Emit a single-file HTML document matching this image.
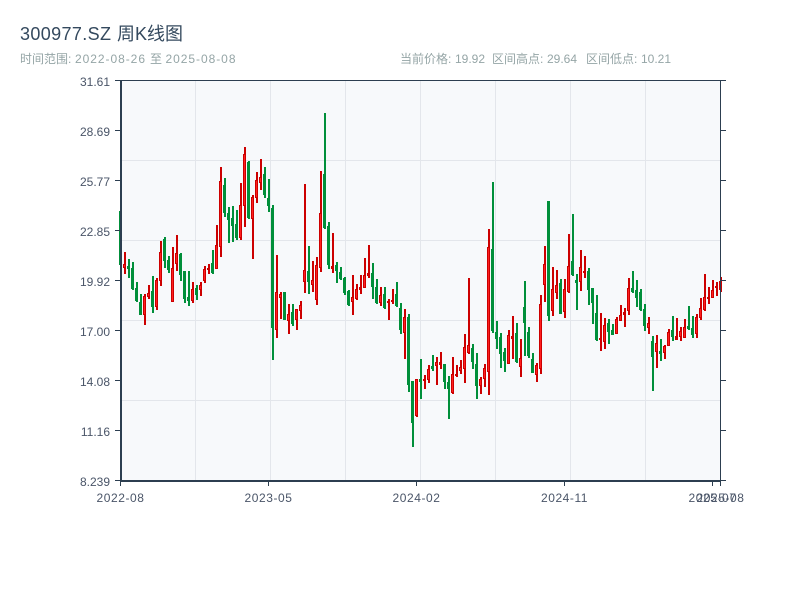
<!DOCTYPE html>
<html lang="zh">
<head>
<meta charset="utf-8">
<title>300977.SZ 周K线图</title>
<style>
html,body{margin:0;padding:0;background:#fff;width:800px;height:600px;overflow:hidden}
svg{position:absolute;left:0;top:0;display:block}
text{font-family:"Liberation Sans","Noto Sans CJK SC",sans-serif}
.t{font-size:18px;fill:#34495e}
.s{font-size:12px;fill:#95a5a6}
.y{font-size:12px;fill:#4a5568;text-anchor:end}
.x{font-size:12px;fill:#4a5568;text-anchor:middle;letter-spacing:.55px}
</style>
</head>
<body>
<svg width="800" height="600" viewBox="0 0 800 600" xmlns="http://www.w3.org/2000/svg">
<text class="t" x="20" y="40" textLength="91" lengthAdjust="spacing">300977.SZ</text>
<text class="t" x="117" y="40" textLength="66" lengthAdjust="spacing">周K线图</text>
<text class="s" x="20" y="63">时间范围:</text>
<text class="s" x="75" y="63" textLength="70" lengthAdjust="spacing">2022-08-26</text>
<text class="s" x="150" y="63">至</text>
<text class="s" x="165.500" y="63" textLength="70" lengthAdjust="spacing">2025-08-08</text>
<text class="s" x="400" y="63">当前价格:</text>
<text class="s" x="455" y="63">19.92</text>
<text class="s" x="492" y="63">区间高点:</text>
<text class="s" x="547" y="63">29.64</text>
<text class="s" x="586" y="63">区间低点:</text>
<text class="s" x="641" y="63">10.21</text>

<rect x="121" y="81" width="600" height="400" fill="#f7f9fb"/>
<path fill="none" stroke="#e3e6eb" stroke-width="1" d="M195.500 81V481M270.500 81V481M345.500 81V481M420.500 81V481M495.500 81V481M570.500 81V481M645.500 81V481M121 160.500H721M121 240.500H721M121 320.500H721M121 400.500H721"/>

<!-- green wicks -->
<path fill="none" stroke="#008f3a" stroke-width="2" d="M121 211V265M129 259V278M133 262V290M137 282V302M141 294V315M153 276V313M165 237V268M169 256V273M181 253V281M185 271V303M189 271V306M197 285V300M213 250V274M225 178V217M229 207V243M233 206V242M237 210V240M249 161V219M265 167V198M269 179V212M273 205V360M285 292V320M293 304V326M309 246V294M325 113V229M329 222V269M337 262V283M341 267V280M345 277V295M349 290V306M373 263V299M377 279V304M385 287V309M397 282V307M401 303V334M409 314V392M413 381V447M421 359V399M433 355V371M445 364V389M449 376V419M473 344V369M477 353V399M493 182V333M497 321V349M501 333V368M505 348V372M517 323V363M525 281V356M529 327V358M533 353V373M549 201V321M561 279V314M573 214V276M577 274V310M589 268V305M593 288V324M597 295V341M609 319V344M613 324V335M633 271V293M637 280V307M641 289V311M645 304V331M653 336V391M661 339V361M673 316V341M689 306V330M693 316V338"/>
<!-- green bodies -->
<path fill="none" stroke="#008f3a" stroke-width="3" d="M120.500 211V265M128.500 266V269M132.500 268V289M136.500 288V301M140.500 302V315M152.500 291V307M164.500 239V261M168.500 260V270M180.500 254V275M184.500 271V299M188.500 297V301M196.500 288V295M212.500 263V273M224.500 185V213M228.500 213V220M232.500 218V226M236.500 224V238M248.500 162V218M264.500 174V195M268.500 198V206M272.500 208V328M284.500 292V320M292.500 312V324M308.500 271V282M324.500 174V228M328.500 226V265M336.500 265V271M340.500 272V279M344.500 278V293M348.500 291V305M372.500 273V287M376.500 287V303M384.500 294V308M396.500 294V306M400.500 308V330M408.500 317V385M412.500 381V423M420.500 379V382M432.500 366V369M444.500 364V382M448.500 382V389M472.500 348V362M476.500 364V386M492.500 249V331M496.500 332V339M500.500 337V354M504.500 352V361M516.500 333V362M524.500 307V323M528.500 332V356M532.500 359V373M548.500 201V316M560.500 283V314M572.500 261V275M576.500 280V283M588.500 271V290M592.500 288V303M596.500 313V340M608.500 323V332M612.500 330V335M632.500 288V292M636.500 290V298M640.500 292V310M644.500 309V326M652.500 341V357M660.500 351V354M672.500 330V337M688.500 326V329M692.500 328V335"/>

<!-- red wicks -->
<path fill="none" stroke="#cc0000" stroke-width="2" d="M125 252V274M145 294V325M149 285V299M157 278V310M161 241V286M173 247V302M177 235V271M193 282V303M201 282V296M205 266V283M209 264V274M217 225V269M221 167V257M241 183V240M245 147V227M253 195V259M257 172V203M261 159V190M277 255V338M281 292V319M289 304V334M297 309V330M301 301V319M305 184V293M313 261V292M317 257V305M321 171V272M333 233V273M353 275V315M357 284V300M361 275V294M365 258V288M369 245V278M381 287V306M389 299V320M393 289V304M405 309V359M417 379V417M425 375V389M429 365V383M437 357V385M441 352V369M453 357V394M457 365V377M461 360V374M465 334V383M469 278V354M481 377V394M485 364V387M489 229V395M509 330V364M513 316V359M521 339V377M537 363V382M541 295V374M545 246V302M553 267V316M557 270V299M565 279V318M569 234V293M581 250V291M585 256V278M601 313V351M605 318V349M617 317V334M621 305V321M625 308V327M629 278V315M649 317V334M657 335V368M665 345V359M669 329V346M677 318V340M681 327V341M685 319V338M697 314V338M701 298V320M705 274V311M709 287V304M713 280V298M717 282V296M721 277V292"/>
<!-- red bodies -->
<path fill="none" stroke="#cc0000" stroke-width="3" d="M124.500 264V268M144.500 296V315M148.500 293V297M156.500 280V307M160.500 252V281M172.500 268V302M176.500 253V264M192.500 289V301M200.500 285V290M204.500 269V281M208.500 268V270M216.500 245V269M220.500 181V247M240.500 205V238M244.500 154V206M252.500 197V219M256.500 180V198M260.500 177V183M276.500 292V330M280.500 294V298M288.500 314V321M296.500 309V320M300.500 305V311M304.500 270V282M312.500 280V285M316.500 265V300M320.500 213V268M332.500 266V269M352.500 297V302M356.500 289V299M360.500 287V290M364.500 275V288M368.500 273V276M380.500 295V303M388.500 301V303M392.500 300V302M404.500 317V333M416.500 379V416M424.500 379V381M428.500 369V380M436.500 362V366M440.500 362V365M452.500 374V393M456.500 374V376M460.500 367V371M464.500 347V369M468.500 345V353M480.500 379V386M484.500 368V379M488.500 247V372M508.500 335V364M512.500 336V339M520.500 358V367M536.500 365V375M540.500 304V369M544.500 264V285M552.500 289V311M556.500 285V293M564.500 289V312M568.500 266V292M580.500 267V282M584.500 271V273M600.500 338V340M604.500 325V342M616.500 319V334M620.500 315V321M624.500 312V315M628.500 288V311M648.500 323V328M656.500 343V352M664.500 346V353M668.500 332V346M676.500 336V340M680.500 331V337M684.500 327V338M696.500 317V334M700.500 308V318M704.500 297V310M708.500 297V299M712.500 290V298M716.500 286V288M720.500 281V290"/>
<path fill="none" stroke="#ff1f1f" stroke-width="1" d="M124.500 265V267M144.500 297V314M148.500 294V296M156.500 281V306M160.500 253V280M172.500 269V301M176.500 254V263M192.500 290V300M200.500 286V289M204.500 270V280M216.500 246V268M220.500 182V246M240.500 206V237M244.500 155V205M252.500 198V218M256.500 181V197M260.500 178V182M276.500 293V329M280.500 295V297M288.500 315V320M296.500 310V319M300.500 306V310M304.500 271V281M312.500 281V284M316.500 266V299M320.500 214V267M352.500 298V301M356.500 290V298M364.500 276V287M380.500 296V302M404.500 318V332M416.500 380V415M428.500 370V379M436.500 363V365M452.500 375V392M460.500 368V370M464.500 348V368M468.500 346V352M480.500 380V385M484.500 369V378M488.500 248V371M508.500 336V363M520.500 359V366M536.500 366V374M540.500 305V368M544.500 265V284M552.500 290V310M556.500 286V292M564.500 290V311M568.500 267V291M580.500 268V281M604.500 326V341M616.500 320V333M620.500 316V320M628.500 289V310M648.500 324V327M656.500 344V351M664.500 347V352M668.500 333V345M680.500 332V336M684.500 328V337M696.500 318V333M700.500 309V317M704.500 298V309M712.500 291V297M720.500 282V289"/>

<!-- axes -->
<g fill="#2c3e50">
<rect x="120" y="81" width="2" height="401"/>
<rect x="120" y="480" width="601" height="2"/>
<rect x="120" y="80" width="606" height="1"/>
<rect x="720" y="80" width="1" height="402"/>
</g>
<path fill="none" stroke="#2c3e50" stroke-width="1" d="M115 80.500H120M115 130.500H120M115 180.500H120M115 230.500H120M115 280.500H120M115 330.500H120M115 380.500H120M115 430.500H120M115 480.500H120M721 130.500H726M721 180.500H726M721 230.500H726M721 280.500H726M721 330.500H726M721 380.500H726M721 430.500H726M721 480.500H726M120.500 482V486M268.500 482V486M416.500 482V486M564.500 482V486M712.500 482V486M720.500 482V486"/>

<text class="y" x="110" y="86">31.61</text>
<text class="y" x="110" y="136">28.69</text>
<text class="y" x="110" y="186">25.77</text>
<text class="y" x="110" y="236">22.85</text>
<text class="y" x="110" y="286">19.92</text>
<text class="y" x="110" y="336">17.00</text>
<text class="y" x="110" y="386">14.08</text>
<text class="y" x="110" y="436">11.16</text>
<text class="y" x="110" y="486">8.239</text>

<text class="x" x="120.500" y="502">2022-08</text>
<text class="x" x="268.500" y="502">2023-05</text>
<text class="x" x="416.500" y="502">2024-02</text>
<text class="x" x="564.500" y="502">2024-11</text>
<text class="x" x="712.500" y="502">2025-07</text>
<text class="x" x="720.500" y="502">2025-08</text>
</svg>
</body>
</html>
